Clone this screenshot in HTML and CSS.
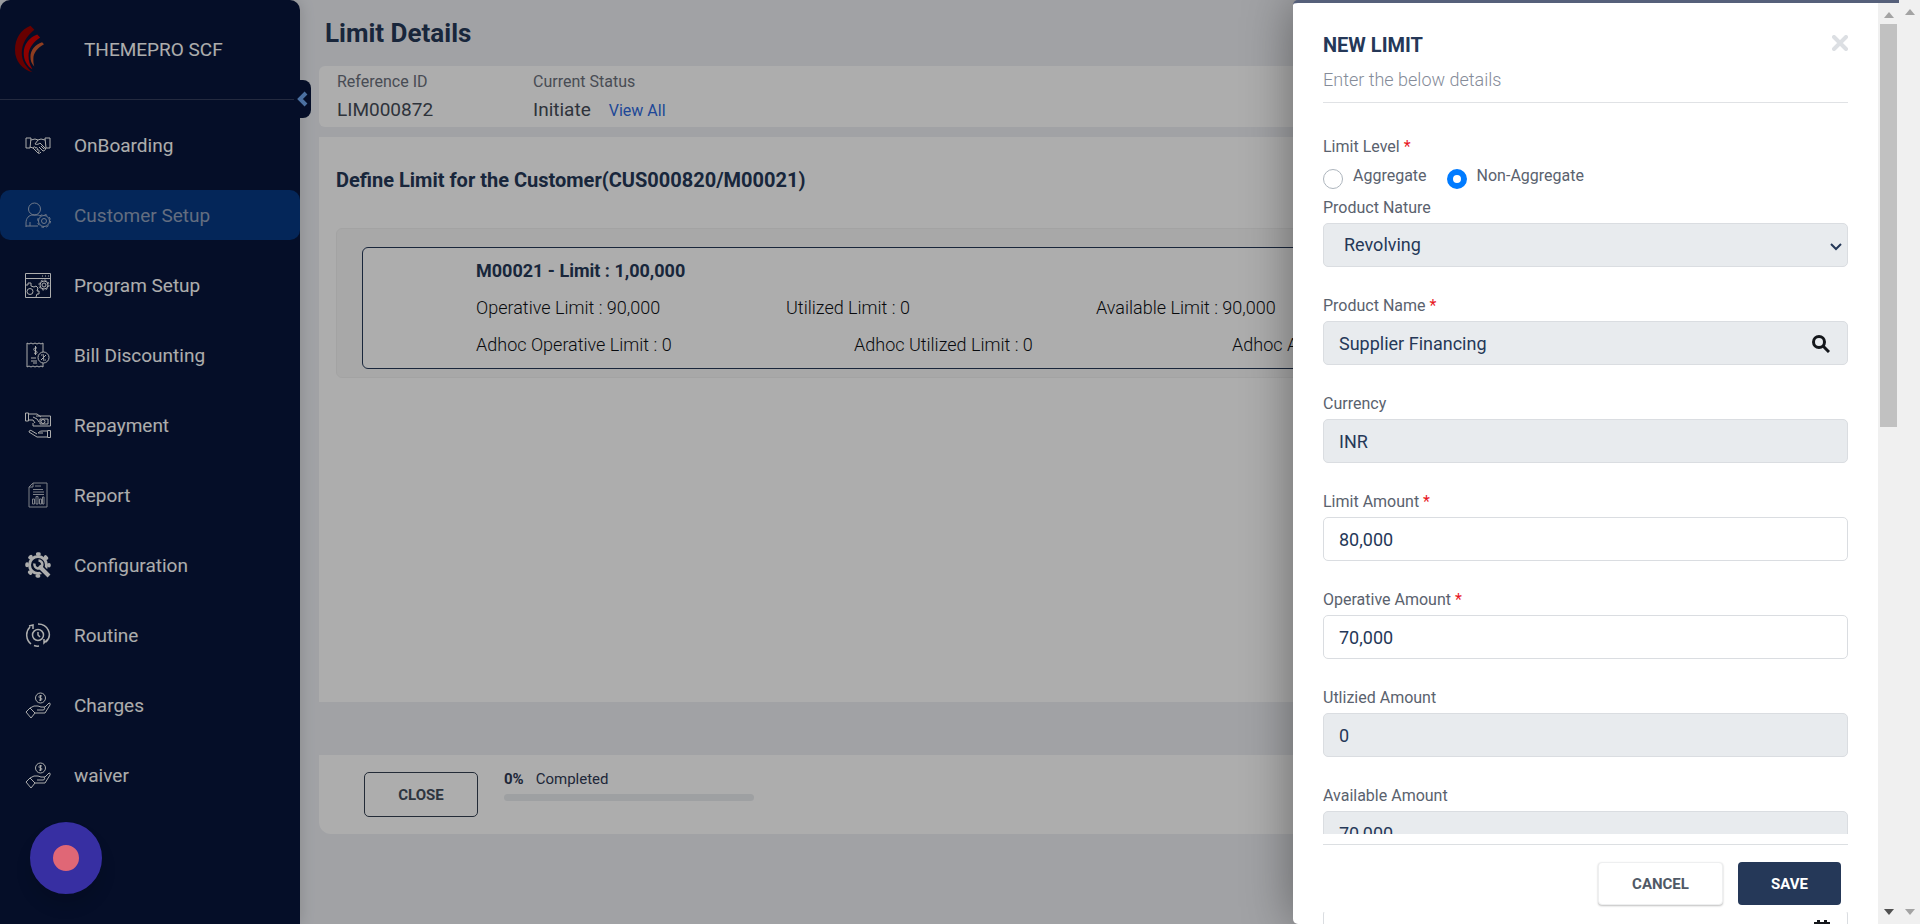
FILE: index.html
```html
<!DOCTYPE html>
<html lang="en">
<head>
<meta charset="utf-8">
<title>Limit Details</title>
<link rel="stylesheet" href="styles.css">
</head>
<body>
<div class="app">
  <aside class="sidebar">
    <div class="brand">
      <svg class="brand-logo" viewBox="0 0 30 50" aria-hidden="true">
        <path fill="#980000" d="M16 0 20 4C12 11 7 18 7 28c0 8 4 14 11 20C7 45 0 36 0 25 0 13 6 4 16 0z"/>
        <path fill="#d20000" d="M23 9l3 3c-8 5-12 12-12 19 0 5 1 9 4 14-6-4-9-10-9-17C9 19 15 12 23 9z"/>
        <path fill="#d25a30" d="M28 17l2 2c-7 4-11 9-11 15 0 3 0 5 1 8-3-3-4-6-4-10 0-7 5-13 12-15z"/>
      </svg>
      <span>THEMEPRO SCF</span>
    </div>
    <button class="collapse" type="button" aria-label="Collapse menu">
      <svg viewBox="0 0 11 16"><path d="M9 2 3 8l6 6"/></svg>
    </button>
    <nav class="menu">
      <a href="#"><svg viewBox="0 0 26 26"><path d="M1 6h5l-1 10H1zM25 6h-5l1 10h4zM6 8l4-1 3 1 3-1 4 1M10 12l3-4M10 12c2 1 4 0 5-1l6 6M5 15l3 1 5 5c1 1 2 0 2 0l1-1M8 16c1-2 3-1 2 0 2-1 3 0 2 2 2-1 3 1 1 3M14 15l4 4c2 0 3-2 2-3M16 14l3 3"/></svg>OnBoarding</a>
      <a href="#" class="active"><svg viewBox="0 0 26 26"><circle cx="9.500" cy="7" r="6"/><path d="M1 25v-4c0-5 3-8 7-8h3c2 0 3 0 4 1M1 24h12M5 20v4"/><circle cx="19" cy="19" r="2.500"/><circle cx="19" cy="19" r="5.500"/><circle cx="19" cy="19" r="6.500" stroke-dasharray="2.500 2.600"/></svg>Customer Setup</a>
      <a href="#"><svg viewBox="0 0 26 26"><path d="M.5 1.500h25v24H.5zM.5 6.500h25M17 4h1M20 4h1M23 4h1"/><circle cx="19" cy="13" r="2"/><circle cx="19" cy="13" r="4"/><circle cx="19" cy="13" r="5" stroke-dasharray="2 1.900"/><circle cx="5" cy="19.500" r="3"/><path d="M1 13h2v-2h3v3l3 1 2-1 2 2-1 3h2v3h-2l-1 3"/></svg>Program Setup</a>
      <a href="#"><svg viewBox="0 0 26 26"><path d="M2 1l2 1 2-1 2 1 2-1 2 1 2-1 2 1 2-1v9M2 1v24l2-1 2 1 2-1 2 1 2-1 2 1 2-1 2 1v-4M6 16h5M6 19h6M8 21h4M12 6c-4-1-4 3-1.500 3s2 4-1.500 2M10.500 4v9"/><circle cx="18.500" cy="15.500" r="5.500"/><path d="M21 13l-5 5M16 13h1M20 18h1M18 12l1 7"/></svg>Bill Discounting</a>
      <a href="#"><svg viewBox="0 0 26 26"><path d="M.5 1h3v8h-3zM4 2h8l4 3M4 8h4l2 3M8 5l4 2 2 3M11 4h14.500v10H8v-3M15 7h8v5h-8z"/><circle cx="18" cy="9.500" r="2"/><path d="M22.500 18.500h3v7h-3zM22 19h-5c-2 0-3 1-4 2h5M22 25H12L4 20c0-2 2-2 3-1l5 3"/></svg>Repayment</a>
      <a href="#"><svg class="thin" viewBox="0 0 26 26"><path d="M8 1h14v24H4V5zM8 1v4H4M10 4h6M8 7.500h10M8 10h11M8 12.500h11M7.500 17h2v5h-2zM11 14.500h2V22h-2zM14.500 17h2v5h-2zM17.500 15h1.500v7h-1.500z"/></svg>Report</a>
      <a href="#"><svg viewBox="0 0 26 26"><circle cx="13" cy="13" r="8.500" stroke-width="3"/><circle cx="13" cy="13" r="11" stroke-width="3.500" stroke-linecap="round" stroke-dasharray="1.500 7.140" stroke-dashoffset=".75"/><path d="M15 15l10 10" stroke="#08163b" stroke-width="7"/><path d="M14 14l10 10" stroke-width="4"/><path d="M9.500 11.500a4 4 0 1 0 4-3" stroke-width="2.500"/></svg>Configuration</a>
      <a href="#"><svg viewBox="0 0 26 26"><g stroke-width="1.500"><circle cx="13" cy="13" r="5.500"/><path d="M13 10v3l2 2M5 5C0 10 1 18 6 22M9 23.500c2 .7 4 .7 5 .5M13 2c10 0 15 11 8 18M4 4l4-1v4M23 17l-4 4v-4"/></g></svg>Routine</a>
      <a href="#"><svg viewBox="0 0 26 26"><circle cx="15.500" cy="6" r="5"/><path d="M17 4c-4-1-4 2-1.500 2s2 3-1.500 2M15.500 3v6M1 20l4-4 5 5-4 5zM5 16l4-2h4l3 1h4l4-4c2 0 1 2 1 2l-5 8H10M12 18h6c2 0 2-2 1-3"/></svg>Charges</a>
      <a href="#"><svg viewBox="0 0 26 26"><circle cx="15.500" cy="6" r="5"/><path d="M17 4c-4-1-4 2-1.500 2s2 3-1.500 2M15.500 3v6M1 20l4-4 5 5-4 5zM5 16l4-2h4l3 1h4l4-4c2 0 1 2 1 2l-5 8H10M12 18h6c2 0 2-2 1-3"/></svg>waiver</a>
    </nav>
  </aside>

  <main class="main">
    <h1>Limit Details</h1>
    <section class="summary">
      <dl><dt>Reference ID</dt><dd>LIM000872</dd></dl>
      <dl><dt>Current Status</dt><dd>Initiate <a href="#">View All</a></dd></dl>
    </section>
    <section class="panel">
      <h2>Define Limit for the Customer(CUS000820/M00021)</h2>
      <div class="limits">
        <div class="limit-card">
          <h3>M00021 - Limit : 1,00,000</h3>
          <div class="row four"><span>Operative Limit : 90,000</span><span>Utilized Limit : 0</span><span>Available Limit : 90,000</span></div>
          <div class="row three"><span>Adhoc Operative Limit : 0</span><span>Adhoc Utilized Limit : 0</span><span>Adhoc Available Limit : 0</span></div>
        </div>
      </div>
    </section>
    <footer class="actions">
      <button type="button" class="close-btn">CLOSE</button>
      <div class="progress">
        <p><b>0%</b><span>Completed</span></p>
        <div class="track"></div>
      </div>
    </footer>
  </main>

  <div class="backdrop"></div>
  <button class="recorder" type="button" aria-label="Record"></button>

  <section class="drawer">
    <div class="drawer-body">
      <header class="drawer-head">
        <div>
          <h2>NEW LIMIT</h2>
          <p>Enter the below details</p>
        </div>
        <button type="button" class="dismiss" aria-label="Close"><svg viewBox="0 0 16 16"><path d="M2 2l12 12M14 2 2 14"/></svg></button>
      </header>
      <form class="form">
        <fieldset>
          <legend>Limit Level <i>*</i></legend>
          <div class="radios">
            <label><input type="radio" name="level">Aggregate</label>
            <label><input type="radio" name="level" checked>Non-Aggregate</label>
          </div>
        </fieldset>
        <div class="field"><label for="nature">Product Nature</label>
          <div class="control"><select id="nature" class="filled"><option>Revolving</option></select>
          <svg class="chevron" viewBox="0 0 12 8"><path d="M1 1l5 5 5-5"/></svg></div></div>
        <div class="field"><label for="name">Product Name <i>*</i></label>
          <div class="control"><input id="name" class="filled" type="text" value="Supplier Financing">
          <svg class="search" viewBox="0 0 18 18"><circle cx="7" cy="7" r="5.500"/><path d="M11 11l6 6"/></svg></div></div>
        <div class="field"><label for="currency">Currency</label><input id="currency" class="filled" type="text" value="INR"></div>
        <div class="field"><label for="limit">Limit Amount <i>*</i></label><input id="limit" type="text" value="80,000"></div>
        <div class="field"><label for="operative">Operative Amount <i>*</i></label><input id="operative" type="text" value="70,000"></div>
        <div class="field"><label for="utilized">Utlizied Amount</label><input id="utilized" class="filled" type="text" value="0"></div>
        <div class="field"><label for="available">Available Amount</label><input id="available" class="filled" type="text" value="70,000"></div>
        <div class="field"><label for="expiry">Expiry Date <i>*</i></label>
          <div class="control"><input id="expiry" type="text">
          <svg class="calendar" viewBox="0 0 16 16"><path d="M0 2h16v14H0zM3 0h3v3H3zM10 0h3v3h-3z"/></svg></div></div>
      </form>
      <footer class="drawer-foot">
        <button type="button" class="cancel">CANCEL</button>
        <button type="button" class="save">SAVE</button>
      </footer>
    </div>
    <div class="bar inner" aria-hidden="true">
      <svg viewBox="0 0 10 6"><path d="M0 6l5-6 5 6z"/></svg>
      <div class="thumb"></div>
      <svg class="down" viewBox="0 0 10 6"><path d="M0 0l5 6 5-6z"/></svg>
    </div>
  </section>
</div>
<div class="bar outer" aria-hidden="true">
  <svg viewBox="0 0 10 6"><path d="M0 6l5-6 5 6z"/></svg>
  <svg class="down" viewBox="0 0 10 6"><path d="M0 0l5 6 5-6z"/></svg>
</div>
</body>
</html>
```

FILE: styles.css
```css
* { box-sizing: border-box; }
body, h1, h2, h3, p, dl, dd, fieldset, legend { margin: 0; padding: 0; }
body {
  display: flex;
  height: 100vh;
  overflow: hidden;
  font-family: Roboto, "Liberation Sans", sans-serif;
  background: #f0f0f0;
}
button, input, select { font: inherit; }
button { cursor: pointer; padding: 0; }
i { font-style: normal; color: #e8191f; }

.app {
  position: relative;
  flex: 1;
  min-width: 0;
  display: flex;
  background: #edeff4;
}

/* Sidebar */
.sidebar {
  position: relative;
  flex: 0 0 300px;
  background: #08163b;
  border-radius: 10px 10px 0 0;
  box-shadow: 0 0 16px rgba(0, 0, 0, .16);
}
.brand {
  display: flex;
  align-items: center;
  gap: 40px;
  height: 100px;
  margin-right: 6px;
  padding-left: 15px;
  border-bottom: 1px solid #353e5d;
  color: #fff;
  font-size: 19px;
}
.brand-logo { width: 29px; height: 50px; }
.collapse {
  position: absolute;
  left: 297px;
  top: 80px;
  width: 14px;
  height: 38px;
  border: 0;
  border-radius: 0 8px 8px 0;
  background: #08163b;
}
.collapse svg { display: block; width: 11px; height: 16px; }
.collapse path { fill: none; stroke: #6fa5ee; stroke-width: 4; }
.menu {
  display: flex;
  flex-direction: column;
  gap: 20px;
  padding-top: 20px;
}
.menu a {
  display: flex;
  align-items: center;
  gap: 23px;
  height: 50px;
  padding-left: 25px;
  border-radius: 10px;
  color: #fff;
  font-size: 19px;
  text-decoration: none;
}
.menu svg {
  width: 26px;
  height: 26px;
  fill: none;
  stroke: #fff;
  stroke-width: 1;
}
.menu .thin { stroke: #b9bdc9; }
.menu .active { background: #063983; color: #93a1bd; }
.menu .active svg { stroke: #a5b2cb; }

/* Page */
.main {
  flex: 1;
  min-width: 0;
  padding: 0 20px 0 19px;
}
h1 {
  padding: 17px 6px;
  color: #253858;
  font-size: 26px;
  line-height: 32px;
}
.summary {
  display: flex;
  padding: 6px 18px 5px;
  border-radius: 6px;
  background: #fff;
}
.summary dl { flex: 0 0 196px; white-space: nowrap; }
.summary dt { color: #6b717c; font-size: 16px; line-height: 20px; }
.summary dd {
  display: flex;
  align-items: baseline;
  gap: 18px;
  height: 30px;
  padding-top: 6px;
  color: #454c58;
  font-size: 19px;
  line-height: 24px;
}
.summary a { color: #2f6be0; font-size: 16px; text-decoration: none; }
.panel {
  min-height: 565px;
  margin-top: 10px;
  padding: 28px 17px;
  background: #fff;
}
.panel h2 { color: #253858; font-size: 20px; line-height: 30px; }
.limits {
  margin-top: 33px;
  padding: 18px 25px 8px;
  border: 1px solid #f1f1f1;
  border-radius: 6px;
  background: #f8f8f8;
}
.limit-card {
  padding: 4px 0 5px 113px;
  border: 1px solid #253858;
  border-radius: 6px;
  background: #fff;
}
.limit-card h3 { color: #253858; font-size: 18px; line-height: 37px; }
.row { display: flex; color: #0d1014; font-size: 18px; font-weight: 300; line-height: 37px; }
.four span { flex: 0 0 310px; }
.three span { flex: 0 0 378px; }
.actions {
  display: flex;
  gap: 26px;
  margin-top: 53px;
  padding: 17px 45px;
  border-radius: 0 0 12px 12px;
  background: #fff;
}
.close-btn {
  width: 114px;
  height: 45px;
  border: 1px solid #344052;
  border-radius: 5px;
  background: #fff;
  color: #454f5e;
  font-size: 15px;
  font-weight: 700;
}
.progress { width: 250px; }
.progress p { display: flex; gap: 12px; color: #303a55; font-size: 15px; line-height: 14px; }
.track { height: 7px; margin-top: 8px; border-radius: 4px; background: #e9ecef; }

.backdrop { position: absolute; inset: 0; background: rgba(0, 0, 0, .32); }
.recorder {
  position: absolute;
  left: 30px;
  bottom: 30px;
  width: 72px;
  height: 72px;
  border: 23px solid #372fa2;
  border-radius: 50%;
  background: #e06776;
  box-shadow: 0 12px 16px rgba(0, 0, 0, .12);
}

/* Drawer */
.drawer {
  position: absolute;
  inset: 0 0 0 auto;
  display: flex;
  width: 606px;
  max-width: 100%;
  border-top: 3px solid #56607a;
  border-radius: 5px 0 0 5px;
  background: #fff;
  box-shadow: 0 0 50px rgba(0, 0, 0, .4);
}
.drawer-body {
  flex: 1;
  min-width: 0;
  padding: 0 30px;
  overflow: hidden;
}
.drawer-head {
  display: flex;
  justify-content: space-between;
  align-items: flex-start;
  padding: 26px 0 9px;
  border-bottom: 1px solid #e0e2e5;
}
.drawer-head h2 { color: #253858; font-size: 20px; font-weight: 700; line-height: 32px; }
.drawer-head p { padding-top: 5px; color: #858c99; font-size: 18px; font-weight: 300; line-height: 27px; }
.dismiss { margin-top: 6px; border: 0; background: none; }
.dismiss svg { display: block; width: 16px; height: 16px; }
.dismiss path { stroke: #dcdfe3; stroke-width: 4; stroke-linecap: round; }
.form { padding-top: 34px; color: #5a626e; font-size: 16px; line-height: 20px; }
fieldset { border: 0; }
.radios { display: flex; gap: 20px; padding-top: 9px; }
.radios label { display: flex; gap: 10px; height: 32px; }
.radios input {
  appearance: none;
  width: 20px;
  height: 20px;
  margin: 3px 0 0;
  border: 1px solid #adb5bd;
  border-radius: 50%;
}
.radios input:checked { border: 6px solid #007bff; }
.field { padding-bottom: 29px; }
.field label { display: block; padding-bottom: 5px; }
.field input, .field select {
  display: block;
  width: 100%;
  height: 44px;
  padding: 0 15px;
  border: 1px solid #dadde1;
  border-radius: 5px;
  background: #fff;
  color: #253858;
  font-size: 18px;
}
.field select { appearance: none; padding: 0 20px; }
.field .filled { background: #e8ebee; }
.control { position: relative; }
.control svg { position: absolute; fill: none; }
.chevron { right: 6px; top: 20px; width: 12px; height: 8px; stroke: #253858; stroke-width: 2; }
.search { right: 18px; top: 14px; width: 18px; height: 18px; stroke: #14171b; stroke-width: 3; }
.control .calendar { right: 18px; top: 11px; width: 16px; height: 16px; fill: #14171b; }
.drawer-foot {
  position: sticky;
  bottom: 12px;
  display: flex;
  justify-content: flex-end;
  gap: 15px;
  height: 78px;
  padding: 28px 7px 7px;
  background: linear-gradient(#fff 10px, #dcdfe2 10px, #dcdfe2 11px, #fff 11px);
}
.drawer-foot button { height: 43px; border-radius: 4px; font-size: 15px; font-weight: 700; }
.cancel {
  width: 125px;
  border: 1px solid #eeeff0;
  background: #fff;
  color: #505966;
  box-shadow: 0 1px 2px rgba(0, 0, 0, .25);
}
.save { width: 103px; border: 0; background: #253858; color: #fff; }

/* Scroll bars */
.bar {
  display: flex;
  flex-direction: column;
  align-items: center;
  flex: 0 0 21px;
  background: #f0f0f0;
}
.bar svg { width: 10px; height: 6px; margin-top: 9px; fill: #a3a3a3; }
.bar .down { margin: auto 0 9px; }
.inner .down { fill: #505050; }
.outer { position: relative; z-index: 1; }
.thumb { width: 17px; height: 403px; margin-top: 6px; background: #c1c1c1; }
```
